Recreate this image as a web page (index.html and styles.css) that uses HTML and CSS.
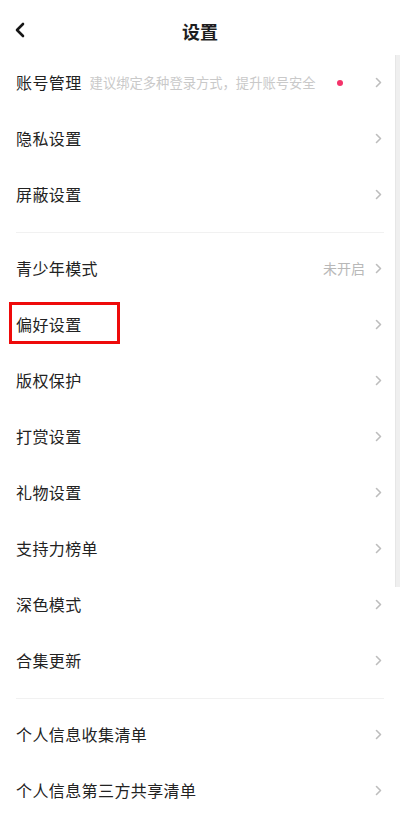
FILE: index.html
```html
<!DOCTYPE html>
<html lang="zh-CN">
<head>
<meta charset="utf-8">
<title>设置</title>
<link rel="stylesheet" href="styles.css">
</head>
<body>
<div class="page">
  <header class="topbar">
    <span class="back">
      <svg width="12" height="16" viewBox="0 0 12 16"><path d="M9 2 L3 8 L9 14" fill="none" stroke="#161616" stroke-width="2.6" stroke-linecap="round" stroke-linejoin="round"/></svg>
    </span>
    <h1 class="title">设置</h1>
  </header>

  <ul class="group">
    <li class="row">
      <span class="label">账号管理</span>
      <span class="hint">建议绑定多种登录方式，提升账号安全</span>
      <span class="dot"></span>
      <span class="chev"><svg width="7" height="11" viewBox="0 0 7 11"><path d="M1.5 1.5 L5.5 5.5 L1.5 9.5" fill="none" stroke="#bdbdbd" stroke-width="1.6" stroke-linecap="round" stroke-linejoin="round"/></svg></span>
    </li>
    <li class="row">
      <span class="label grow">隐私设置</span>
      <span class="chev"><svg width="7" height="11" viewBox="0 0 7 11"><path d="M1.5 1.5 L5.5 5.5 L1.5 9.5" fill="none" stroke="#bdbdbd" stroke-width="1.6" stroke-linecap="round" stroke-linejoin="round"/></svg></span>
    </li>
    <li class="row">
      <span class="label grow">屏蔽设置</span>
      <span class="chev"><svg width="7" height="11" viewBox="0 0 7 11"><path d="M1.5 1.5 L5.5 5.5 L1.5 9.5" fill="none" stroke="#bdbdbd" stroke-width="1.6" stroke-linecap="round" stroke-linejoin="round"/></svg></span>
    </li>
  </ul>

  <div class="divider"></div>

  <ul class="group">
    <li class="row">
      <span class="label grow">青少年模式</span>
      <span class="value">未开启</span>
      <span class="chev"><svg width="7" height="11" viewBox="0 0 7 11"><path d="M1.5 1.5 L5.5 5.5 L1.5 9.5" fill="none" stroke="#bdbdbd" stroke-width="1.6" stroke-linecap="round" stroke-linejoin="round"/></svg></span>
    </li>
    <li class="row">
      <span class="label grow">偏好设置</span>
      <span class="chev"><svg width="7" height="11" viewBox="0 0 7 11"><path d="M1.5 1.5 L5.5 5.5 L1.5 9.5" fill="none" stroke="#bdbdbd" stroke-width="1.6" stroke-linecap="round" stroke-linejoin="round"/></svg></span>
      <span class="highlight"></span>
    </li>
    <li class="row">
      <span class="label grow">版权保护</span>
      <span class="chev"><svg width="7" height="11" viewBox="0 0 7 11"><path d="M1.5 1.5 L5.5 5.5 L1.5 9.5" fill="none" stroke="#bdbdbd" stroke-width="1.6" stroke-linecap="round" stroke-linejoin="round"/></svg></span>
    </li>
    <li class="row">
      <span class="label grow">打赏设置</span>
      <span class="chev"><svg width="7" height="11" viewBox="0 0 7 11"><path d="M1.5 1.5 L5.5 5.5 L1.5 9.5" fill="none" stroke="#bdbdbd" stroke-width="1.6" stroke-linecap="round" stroke-linejoin="round"/></svg></span>
    </li>
    <li class="row">
      <span class="label grow">礼物设置</span>
      <span class="chev"><svg width="7" height="11" viewBox="0 0 7 11"><path d="M1.5 1.5 L5.5 5.5 L1.5 9.5" fill="none" stroke="#bdbdbd" stroke-width="1.6" stroke-linecap="round" stroke-linejoin="round"/></svg></span>
    </li>
    <li class="row">
      <span class="label grow">支持力榜单</span>
      <span class="chev"><svg width="7" height="11" viewBox="0 0 7 11"><path d="M1.5 1.5 L5.5 5.5 L1.5 9.5" fill="none" stroke="#bdbdbd" stroke-width="1.6" stroke-linecap="round" stroke-linejoin="round"/></svg></span>
    </li>
    <li class="row">
      <span class="label grow">深色模式</span>
      <span class="chev"><svg width="7" height="11" viewBox="0 0 7 11"><path d="M1.5 1.5 L5.5 5.5 L1.5 9.5" fill="none" stroke="#bdbdbd" stroke-width="1.6" stroke-linecap="round" stroke-linejoin="round"/></svg></span>
    </li>
    <li class="row">
      <span class="label grow">合集更新</span>
      <span class="chev"><svg width="7" height="11" viewBox="0 0 7 11"><path d="M1.5 1.5 L5.5 5.5 L1.5 9.5" fill="none" stroke="#bdbdbd" stroke-width="1.6" stroke-linecap="round" stroke-linejoin="round"/></svg></span>
    </li>
  </ul>

  <div class="divider"></div>

  <ul class="group">
    <li class="row">
      <span class="label grow">个人信息收集清单</span>
      <span class="chev"><svg width="7" height="11" viewBox="0 0 7 11"><path d="M1.5 1.5 L5.5 5.5 L1.5 9.5" fill="none" stroke="#bdbdbd" stroke-width="1.6" stroke-linecap="round" stroke-linejoin="round"/></svg></span>
    </li>
    <li class="row">
      <span class="label grow">个人信息第三方共享清单</span>
      <span class="chev"><svg width="7" height="11" viewBox="0 0 7 11"><path d="M1.5 1.5 L5.5 5.5 L1.5 9.5" fill="none" stroke="#bdbdbd" stroke-width="1.6" stroke-linecap="round" stroke-linejoin="round"/></svg></span>
    </li>
  </ul>

  <div class="scrollbar"></div>
</div>
</body>
</html>
```

FILE: styles.css
```css
* {
  box-sizing: border-box;
}

html, body {
  margin: 0;
  padding: 0;
  background: #ffffff;
}

body {
  font-family: "Noto Sans CJK SC", "Noto Sans", sans-serif;
  color: #222222;
  overflow: hidden;
}

.page {
  position: relative;
  width: 400px;
  height: 821px;
  overflow: hidden;
  background: #ffffff;
}

.topbar {
  position: relative;
  height: 55px;
  padding-top: 19px;
  display: flex;
  justify-content: center;
  align-items: flex-start;
}

.topbar .back {
  position: absolute;
  left: 14px;
  top: 22px;
  width: 12px;
  height: 16px;
  display: flex;
}

.title {
  margin: 0;
  line-height: 24px;
  font-size: 18px;
  font-weight: 700;
  color: #1e1e1e;
}

.group {
  list-style: none;
  margin: 0;
  padding: 0;
}

.row {
  position: relative;
  height: 56px;
  padding: 0 18px 0 16px;
  display: flex;
  align-items: center;
}

.label {
  font-size: 16px;
  font-weight: 400;
  color: #222222;
  white-space: nowrap;
  letter-spacing: 0.4px;
  line-height: 22px;
  margin-top: -2px;
}

.grow {
  flex: 1;
}

.hint {
  flex: 1;
  margin-left: 8px;
  margin-top: -2px;
  font-size: 13.3px;
  color: #c9c9c9;
  white-space: nowrap;
}

.dot {
  width: 6px;
  height: 6px;
  border-radius: 50%;
  background: #f4336a;
  margin-right: 32px;
  margin-top: -1px;
}

.value {
  font-size: 14px;
  color: #b8b8b8;
  margin-right: 10px;
  margin-top: -2px;
}

.chev {
  display: flex;
  width: 7px;
  height: 11px;
  margin-top: -1px;
}

.divider {
  height: 18px;
  display: flex;
  align-items: center;
  padding: 0 16px;
}

.divider::before {
  content: "";
  display: block;
  width: 100%;
  height: 1px;
  background: #f1f1f1;
}

.highlight {
  position: absolute;
  left: 9px;
  top: 5px;
  width: 111px;
  height: 42px;
  border: 3px solid #ee0a0a;
}

.scrollbar {
  position: absolute;
  right: 0;
  top: 55px;
  width: 5px;
  height: 532px;
  background: #efefef;
  border-left: 1px solid #e6e6e6;
}
```
